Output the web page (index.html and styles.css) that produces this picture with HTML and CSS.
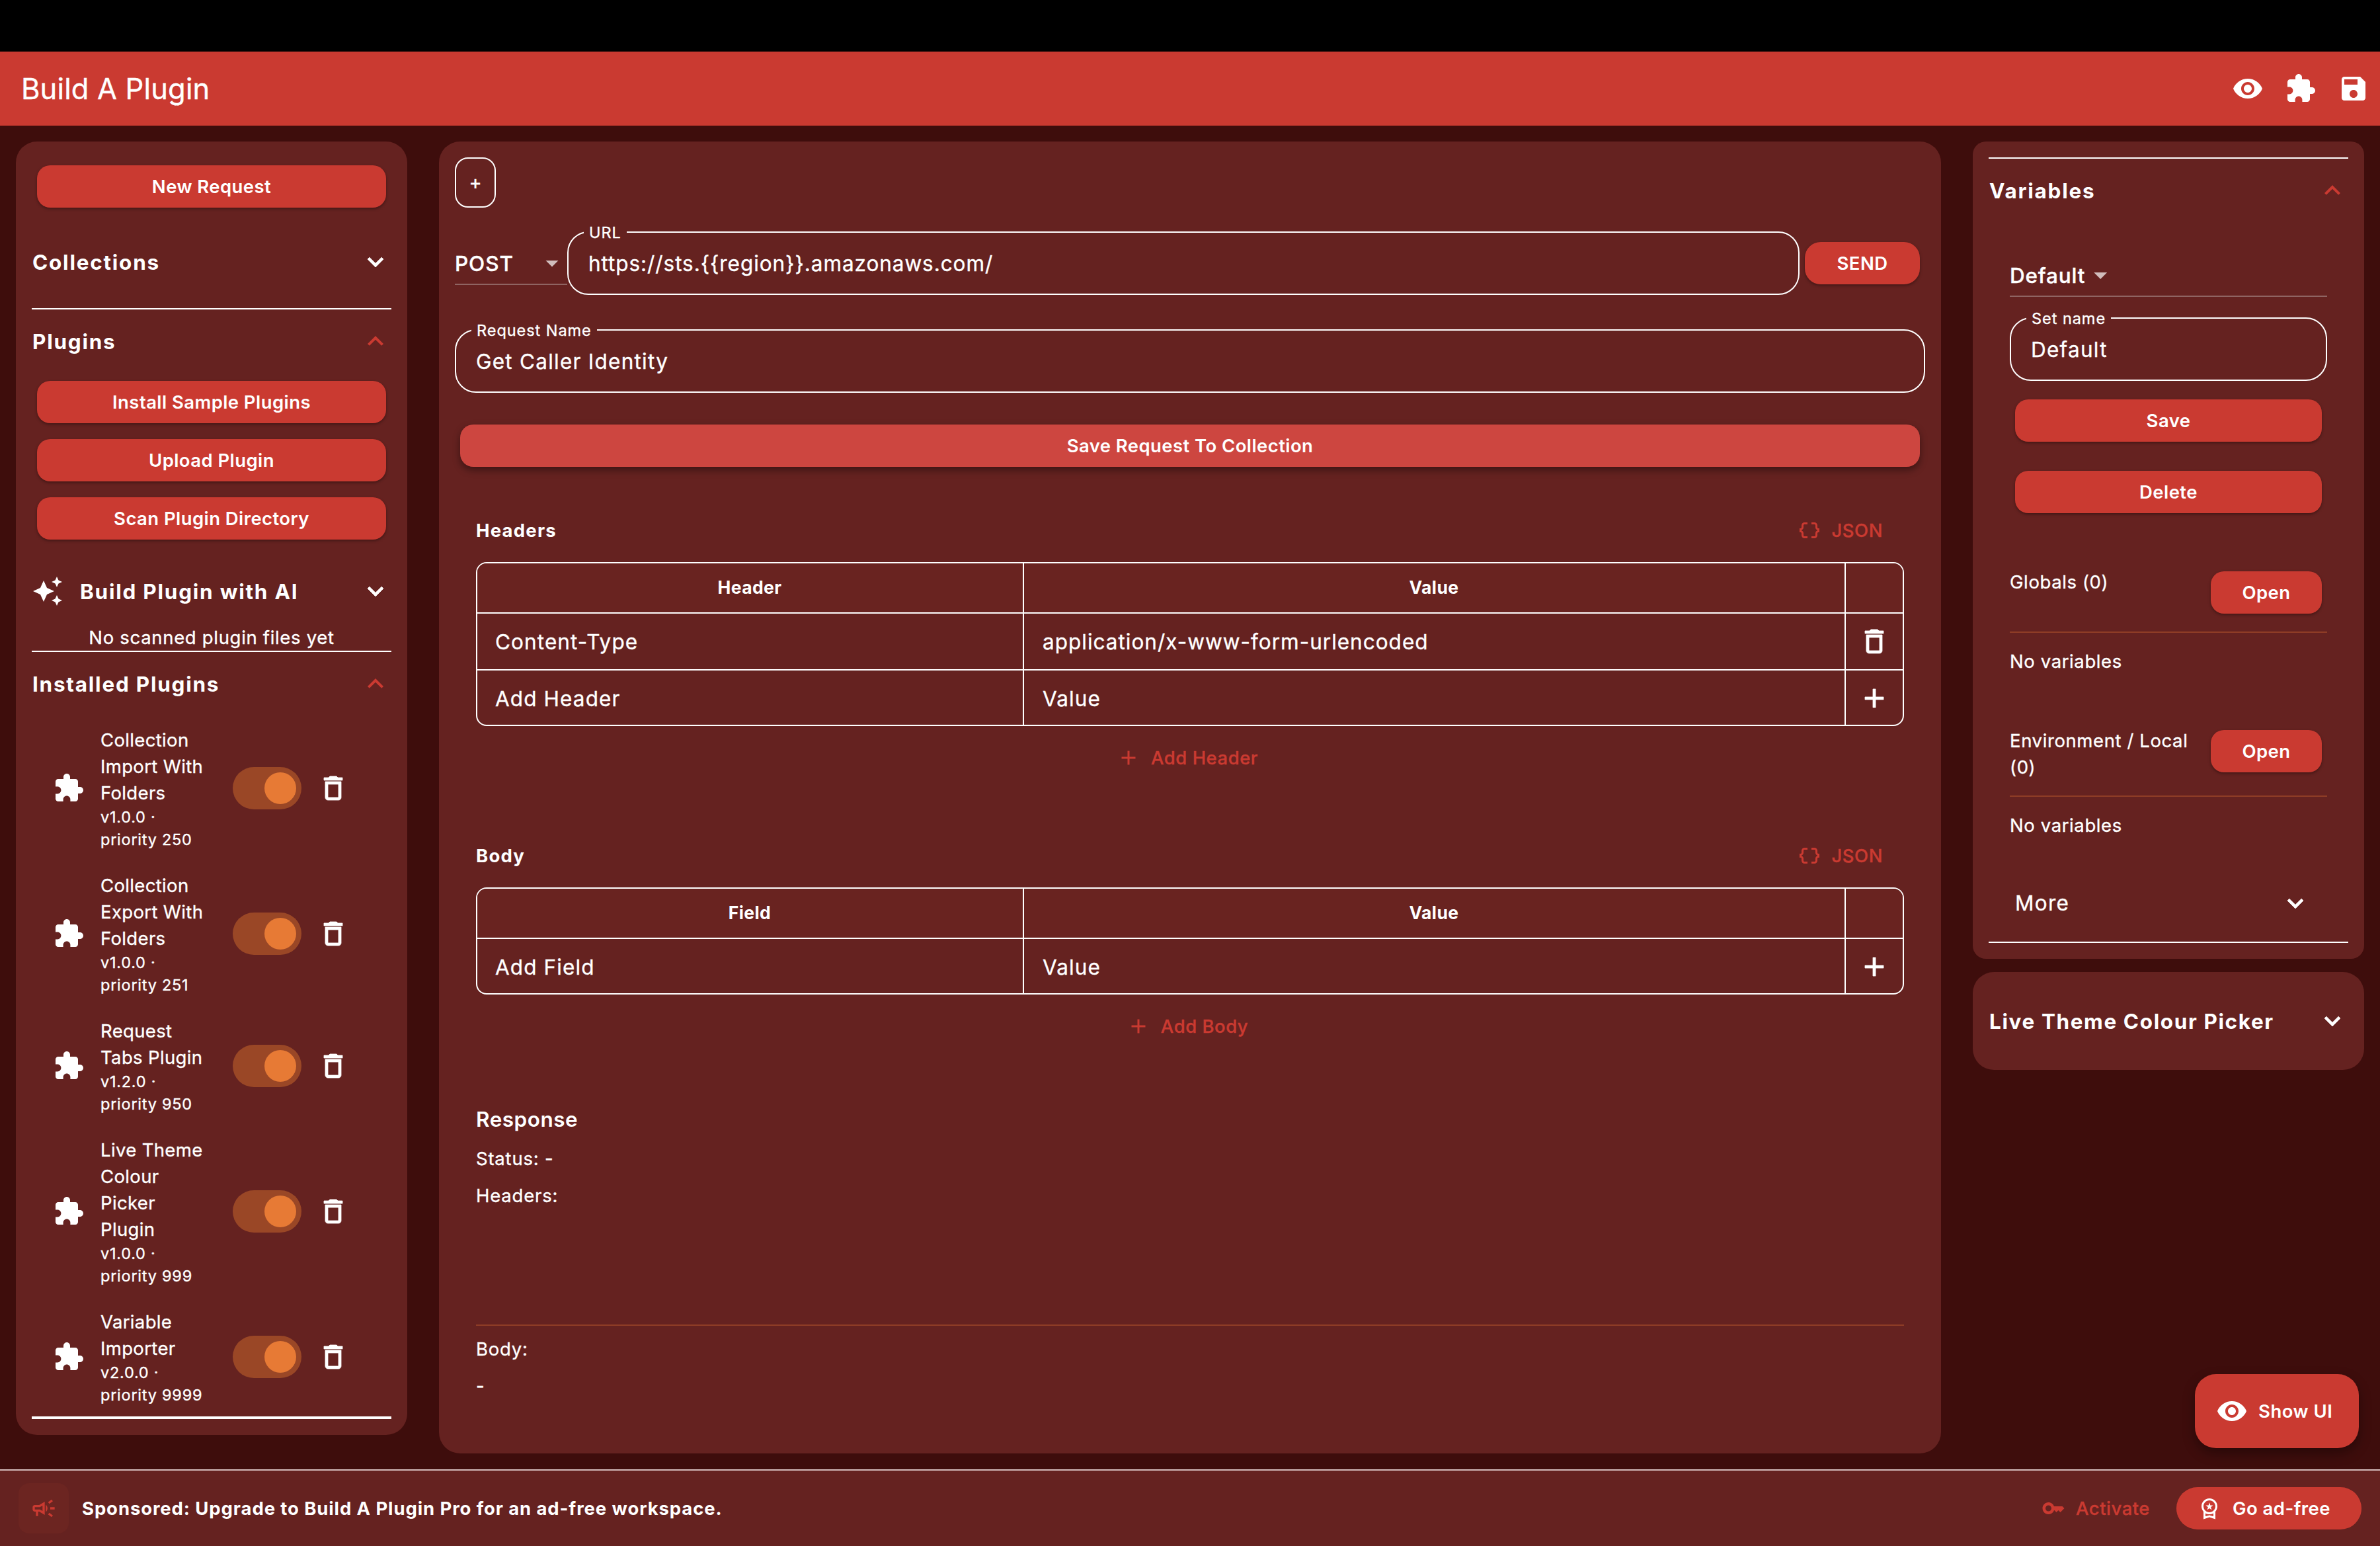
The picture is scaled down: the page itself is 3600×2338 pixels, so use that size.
FILE: index.html
```html
<!DOCTYPE html>
<html lang="en">
<head>
<meta charset="utf-8">
<title>Build A Plugin</title>
<link rel="stylesheet" href="styles.css">
</head>
<body>
<svg class="sprite" aria-hidden="true">
  <symbol id="i-down" viewBox="0 0 24 24"><path d="M16.59 8.59L12 13.17 7.41 8.59 6 10l6 6 6-6z"/></symbol>
  <symbol id="i-up" viewBox="0 0 24 24"><path d="M12 8l-6 6 1.41 1.41L12 10.83l4.59 4.58L18 14z"/></symbol>
  <symbol id="i-puzzle" viewBox="0 0 24 24"><path d="M20.5 11H19V7c0-1.1-.9-2-2-2h-4V3.5C13 2.12 11.88 1 10.5 1S8 2.12 8 3.5V5H4c-1.1 0-1.99.9-1.99 2v3.8H3.5c1.49 0 2.7 1.21 2.7 2.7s-1.21 2.7-2.7 2.7H2V20c0 1.1.9 2 2 2h3.8v-1.5c0-1.49 1.21-2.7 2.7-2.7 1.49 0 2.7 1.21 2.7 2.7V22H17c1.1 0 2-.9 2-2v-4h1.5c1.38 0 2.5-1.12 2.5-2.5S21.88 11 20.5 11z"/></symbol>
  <symbol id="i-trash" viewBox="0 0 24 24"><path d="M6 19c0 1.1.9 2 2 2h8c1.1 0 2-.9 2-2V7H6v12zM8 9h8v10H8V9zm7.5-5l-1-1h-5l-1 1H5v2h14V4h-3.5z"/></symbol>
  <symbol id="i-eye" viewBox="0 0 24 24"><path d="M12 4.5C7 4.5 2.73 7.61 1 12c1.73 4.39 6 7.5 11 7.5s9.27-3.11 11-7.5c-1.73-4.39-6-7.5-11-7.5zM12 17c-2.76 0-5-2.24-5-5s2.24-5 5-5 5 2.24 5 5-2.24 5-5 5zm0-8c-1.66 0-3 1.34-3 3s1.34 3 3 3 3-1.34 3-3-1.34-3-3-3z"/></symbol>
  <symbol id="i-save" viewBox="0 0 24 24"><path d="M17 3H5c-1.11 0-2 .9-2 2v14c0 1.1.89 2 2 2h14c1.1 0 2-.9 2-2V7l-4-4zm-5 16c-1.66 0-3-1.34-3-3s1.34-3 3-3 3 1.34 3 3-1.34 3-3 3zm3-10H5V5h10v4z"/></symbol>
  <symbol id="i-sparkle" viewBox="0 0 24 24"><path d="M19 9l1.25-2.75L23 5l-2.75-1.25L19 1l-1.25 2.75L15 5l2.75 1.25L19 9zm-7.5.5L9 4 6.5 9.5 1 12l5.5 2.5L9 20l2.5-5.5L17 12l-5.5-2.5zM19 15l-1.25 2.75L15 19l2.75 1.25L19 23l1.25-2.75L23 19l-2.75-1.25L19 15z"/></symbol>
  <symbol id="i-add" viewBox="0 0 24 24"><path d="M19 13h-6v6h-2v-6H5v-2h6V5h2v6h6v2z"/></symbol>
  <symbol id="i-braces" viewBox="0 0 24 24"><path d="M4 7v2c0 .55-.45 1-1 1H2v4h1c.55 0 1 .45 1 1v2c0 1.65 1.35 3 3 3h3v-2H7c-.55 0-1-.45-1-1v-2c0-1.3-.84-2.42-2-2.83v-.34C5.16 11.42 6 10.3 6 9V7c0-.55.45-1 1-1h3V4H7C5.35 4 4 5.35 4 7zM21 10c-.55 0-1-.45-1-1V7c0-1.65-1.35-3-3-3h-3v2h3c.55 0 1 .45 1 1v2c0 1.3.84 2.42 2 2.83v.34c-1.16.41-2 1.52-2 2.83v2c0 .55-.45 1-1 1h-3v2h3c1.65 0 3-1.35 3-3v-2c0-.55.45-1 1-1h1v-4h-1z"/></symbol>
  <symbol id="i-campaign" viewBox="0 0 24 24"><path d="M18 11v2h4v-2h-4zm-2 6.61c.96.71 2.21 1.65 3.2 2.39.4-.53.8-1.07 1.2-1.6-.99-.74-2.24-1.68-3.2-2.4-.4.54-.8 1.08-1.2 1.61zM20.4 5.6c-.4-.53-.8-1.07-1.2-1.6-.99.74-2.24 1.68-3.2 2.4.4.53.8 1.07 1.2 1.6.96-.72 2.21-1.65 3.2-2.4zM4 9c-1.1 0-2 .9-2 2v2c0 1.1.9 2 2 2h1v4h2v-4h1l5 3V6L8 9H4zm5.03 1.71L11 9.53v4.94l-1.97-1.18-.48-.29H4v-2h4.55l.48-.29zM15.5 12c0-1.33-.58-2.53-1.5-3.35v6.69c.92-.81 1.5-2.01 1.5-3.34z"/></symbol>
  <symbol id="i-key" viewBox="0 0 24 24"><path d="M21 10h-8.35C11.83 7.67 9.61 6 7 6c-3.31 0-6 2.69-6 6s2.69 6 6 6c2.61 0 4.83-1.67 5.65-4H13l2 2 2-2 2 2 4-4.04L21 10zM7 15c-1.65 0-3-1.35-3-3s1.35-3 3-3 3 1.35 3 3-1.35 3-3 3z"/></symbol>
  <symbol id="i-premium" viewBox="0 0 24 24"><path d="M9.68 13.69L12 11.93l2.31 1.76-.88-2.85L15.75 9h-2.84L12 6.19 11.09 9H8.25l2.31 1.84-.88 2.85zM20 10c0-4.42-3.58-8-8-8s-8 3.58-8 8c0 2.03.76 3.87 2 5.28V23l6-2 6 2v-7.72c1.24-1.41 2-3.25 2-5.28zm-8-6c3.31 0 6 2.69 6 6s-2.69 6-6 6-6-2.69-6-6 2.69-6 6-6zm0 15l-4 1.02v-3.1c1.18.68 2.54 1.08 4 1.08s2.82-.4 4-1.08v3.1L12 19z"/></symbol>
</svg>

<div class="app">
  <div class="statusbar"></div>
  <header class="appbar">
    <h1 class="appbar-title">Build A Plugin</h1>
    <div class="appbar-actions">
      <svg class="icon"><use href="#i-eye"/></svg>
      <svg class="icon"><use href="#i-puzzle"/></svg>
      <svg class="icon"><use href="#i-save"/></svg>
    </div>
  </header>

  <main class="workspace">
    <aside class="panel sidebar">
      <button class="btn">New Request</button>
      <div class="section section-collections"><h2>Collections</h2><svg class="icon bold"><use href="#i-down"/></svg></div>
      <div class="rule"></div>
      <div class="section"><h2>Plugins</h2><svg class="icon accent"><use href="#i-up"/></svg></div>
      <div class="button-stack">
        <button class="btn">Install Sample Plugins</button>
        <button class="btn">Upload Plugin</button>
        <button class="btn">Scan Plugin Directory</button>
      </div>
      <div class="section section-ai"><svg class="icon"><use href="#i-sparkle"/></svg><h2>Build Plugin with AI</h2><svg class="icon bold"><use href="#i-down"/></svg></div>
      <p class="empty-note">No scanned plugin files yet</p>
      <div class="rule"></div>
      <div class="section"><h2>Installed Plugins</h2><svg class="icon accent"><use href="#i-up"/></svg></div>
      <ul class="plugins">
        <li class="plugin"><svg class="icon"><use href="#i-puzzle"/></svg><div class="plugin-text"><div class="plugin-name">Collection Import With Folders</div><div class="plugin-meta">v1.0.0 · priority 250</div></div><span class="switch"></span><svg class="icon bold"><use href="#i-trash"/></svg></li>
        <li class="plugin"><svg class="icon"><use href="#i-puzzle"/></svg><div class="plugin-text"><div class="plugin-name">Collection Export With Folders</div><div class="plugin-meta">v1.0.0 · priority 251</div></div><span class="switch"></span><svg class="icon bold"><use href="#i-trash"/></svg></li>
        <li class="plugin"><svg class="icon"><use href="#i-puzzle"/></svg><div class="plugin-text"><div class="plugin-name">Request Tabs Plugin</div><div class="plugin-meta">v1.2.0 · priority 950</div></div><span class="switch"></span><svg class="icon bold"><use href="#i-trash"/></svg></li>
        <li class="plugin"><svg class="icon"><use href="#i-puzzle"/></svg><div class="plugin-text"><div class="plugin-name">Live Theme Colour Picker Plugin</div><div class="plugin-meta">v1.0.0 · priority 999</div></div><span class="switch"></span><svg class="icon bold"><use href="#i-trash"/></svg></li>
        <li class="plugin"><svg class="icon"><use href="#i-puzzle"/></svg><div class="plugin-text"><div class="plugin-name">Variable Importer</div><div class="plugin-meta">v2.0.0 · priority 9999</div></div><span class="switch"></span><svg class="icon bold"><use href="#i-trash"/></svg></li>
      </ul>
      <div class="rule rule-thick"></div>
    </aside>

    <section class="panel request">
      <button class="tab-add">+</button>
      <div class="url-row">
        <div class="select method"><span>POST</span><i class="caret"></i></div>
        <div class="field url"><label>URL</label><span>https://sts.{{region}}.amazonaws.com/</span></div>
        <button class="btn btn-send">SEND</button>
      </div>
      <div class="field request-name"><label>Request Name</label><span>Get Caller Identity</span></div>
      <button class="btn btn-save-request">Save Request To Collection</button>

      <div class="editor">
        <div class="editor-head"><h3>Headers</h3><button class="text-btn"><svg class="icon icon-s"><use href="#i-braces"/></svg>JSON</button></div>
        <div class="table">
          <div class="row row-head"><div>Header</div><div>Value</div><div></div></div>
          <div class="row"><div>Content-Type</div><div class="long">application/x-www-form-urlencoded</div><div><svg class="icon bold"><use href="#i-trash"/></svg></div></div>
          <div class="row"><div>Add Header</div><div>Value</div><div><svg class="icon bold"><use href="#i-add"/></svg></div></div>
        </div>
        <button class="text-btn add-btn"><svg class="icon icon-s"><use href="#i-add"/></svg>Add Header</button>
      </div>

      <div class="editor editor-body">
        <div class="editor-head"><h3>Body</h3><button class="text-btn"><svg class="icon icon-s"><use href="#i-braces"/></svg>JSON</button></div>
        <div class="table">
          <div class="row row-head"><div>Field</div><div>Value</div><div></div></div>
          <div class="row"><div>Add Field</div><div>Value</div><div><svg class="icon bold"><use href="#i-add"/></svg></div></div>
        </div>
        <button class="text-btn add-btn"><svg class="icon icon-s"><use href="#i-add"/></svg>Add Body</button>
      </div>

      <div class="response">
        <h3>Response</h3>
        <p>Status: -</p>
        <p>Headers:</p>
        <div class="rule-soft"></div>
        <p>Body:</p>
        <p>-</p>
      </div>
    </section>

    <div class="right">
      <aside class="panel variables">
        <div class="rule"></div>
        <div class="section"><h2>Variables</h2><svg class="icon accent"><use href="#i-up"/></svg></div>
        <div class="variables-body">
          <div class="select set-select"><span>Default</span><i class="caret"></i></div>
          <div class="field set-name"><label>Set name</label><span>Default</span></div>
          <button class="btn btn-save">Save</button>
          <button class="btn btn-delete">Delete</button>
          <div class="scope scope-global"><span>Globals (0)</span><button class="btn">Open</button></div>
          <div class="rule-soft"></div>
          <p class="none">No variables</p>
          <div class="scope"><span>Environment / Local (0)</span><button class="btn">Open</button></div>
          <div class="rule-soft"></div>
          <p class="none">No variables</p>
          <div class="more"><span>More</span><svg class="icon bold"><use href="#i-down"/></svg></div>
        </div>
        <div class="rule"></div>
      </aside>
      <aside class="panel theme">
        <div class="section"><h2>Live Theme Colour Picker</h2><svg class="icon bold"><use href="#i-down"/></svg></div>
      </aside>
    </div>
    <button class="fab"><svg class="icon"><use href="#i-eye"/></svg>Show UI</button>
  </main>

  <footer class="sponsor">
    <span class="sponsor-tile"><svg class="icon"><use href="#i-campaign"/></svg></span>
    <strong>Sponsored: Upgrade to Build A Plugin Pro for an ad-free workspace.</strong>
    <button class="text-btn activate"><svg class="icon icon-s"><use href="#i-key"/></svg>Activate</button>
    <button class="ad-free"><svg class="icon icon-s"><use href="#i-premium"/></svg>Go ad-free</button>
  </footer>
</div>
</body>
</html>
```
FILE: styles.css
```css
:root {
  --bg: #3e0d0c;
  --panel: #652220;
  --primary: #ca3a31;
  --soft: #8f3d26;
}

* { box-sizing: border-box; }

body {
  margin: 0;
  background: var(--bg);
  color: #fff;
  font: 400 27.5px/40px Inter, "Liberation Sans", sans-serif;
  -webkit-text-stroke: 0.35px currentColor;
}

h1, h2, h3, p, ul { margin: 0; padding: 0; }

button {
  border: 0;
  padding: 0;
  margin: 0;
  background: none;
  color: inherit;
  font: inherit;
}

h2, h3, strong, .btn, .fab, .ad-free, .row-head { -webkit-text-stroke: 0; }

.sprite { position: absolute; width: 0; height: 0; }

.icon {
  display: block;
  flex: none;
  width: 48px;
  height: 48px;
  fill: currentColor;
}

.icon-s { width: 36px; height: 36px; }
.accent { color: var(--primary); }
.bold { stroke: currentColor; stroke-width: 0.4px; }

.app {
  display: flex;
  flex-direction: column;
  width: 3600px;
  height: 2338px;
}

.statusbar { height: 78px; background: #000; }

.appbar {
  display: flex;
  align-items: center;
  justify-content: space-between;
  height: 112px;
  padding: 0 16px 0 32px;
  background: var(--primary);
}

.appbar-title {
  font-size: 43.5px;
  font-weight: 400;
  letter-spacing: 0.15px;
}

.appbar-actions { display: flex; gap: 32px; }

.workspace {
  position: relative;
  display: flex;
  align-items: flex-start;
  gap: 48px;
  height: 2032px;
  padding: 24px 24px 0;
}

.panel {
  background: var(--panel);
  border-radius: 32px;
}

.rule { height: 2px; background: #fff; }
.rule-thick { height: 4px; }
.rule-soft { height: 2px; background: var(--soft); }

.section {
  display: flex;
  align-items: center;
  height: 96px;
}

.section h2 {
  flex: 1;
  padding: 2px 0 0 1px;
  font-size: 31.5px;
  font-weight: 700;
  letter-spacing: 1.75px;
}

.btn {
  display: flex;
  align-items: center;
  justify-content: center;
  height: 64px;
  border-radius: 20px;
  background: var(--primary);
  box-shadow: 0 2px 4px rgba(0, 0, 0, 0.35);
  font-weight: 600;
  letter-spacing: 0.42px;
}

/* Sidebar */
.sidebar {
  display: flex;
  flex-direction: column;
  width: 592px;
  height: 1956px;
  padding: 36px 24px 24px;
}

.sidebar .btn { margin: 0 8px; }
.section-collections { height: 140px; margin-top: 12px; }

.button-stack {
  display: flex;
  flex-direction: column;
  gap: 24px;
  margin-top: 12px;
}

.section-ai { gap: 24px; margin-top: 30px; }

.empty-note {
  padding-top: 2px;
  text-align: center;
  letter-spacing: 0.68px;
}

.plugins { list-style: none; }

.plugin {
  display: flex;
  align-items: center;
  gap: 24px;
  padding: 16px 0 16px 32px;
}

.plugin-text { width: 176px; margin: 1px 0 -1px; padding-right: 8px; }
.plugin-name { letter-spacing: 0.35px; }

.plugin-meta {
  font-size: 23.5px;
  line-height: 34px;
  letter-spacing: 0.75px;
}

.switch {
  display: flex;
  align-items: center;
  justify-content: flex-end;
  width: 104px;
  height: 64px;
  padding: 8px;
  border-radius: 32px;
  background: #9a4726;
}

.switch::after {
  content: "";
  width: 48px;
  height: 48px;
  border-radius: 50%;
  background: #e77a35;
}

/* Request editor */
.request {
  display: flex;
  flex-direction: column;
  width: 2272px;
  height: 1984px;
  padding: 24px;
}

.tab-add {
  width: 62px;
  height: 76px;
  border: 2px solid #fff;
  border-radius: 20px;
  font-size: 29px;
}

.url-row {
  display: flex;
  align-items: center;
  margin-top: 36px;
}

.select {
  display: flex;
  align-items: center;
  border-bottom: 2px solid #8f6462;
  font-size: 31.5px;
  font-weight: 500;
}

.method {
  justify-content: space-between;
  width: 170px;
  height: 66px;
  padding: 3px 13px 0 0;
  letter-spacing: 0.9px;
}

.caret {
  width: 20px;
  height: 10px;
  background: #d1bdbc;
  clip-path: polygon(0 0, 100% 0, 50% 100%);
}

.field {
  position: relative;
  display: flex;
  align-items: center;
  height: 96px;
  padding: 2px 0 0 30px;
  border: 2px solid #fff;
  border-radius: 32px;
  font-size: 31.5px;
  letter-spacing: 1.25px;
}

.field label {
  position: absolute;
  left: 23px;
  top: -19px;
  padding: 0 8px;
  background: var(--panel);
  font-size: 23.5px;
  letter-spacing: 0.95px;
  line-height: 38px;
}

.url { flex: 1; letter-spacing: 0.93px; }

.btn-send {
  width: 174px;
  margin: 0 8px;
  border-radius: 24px;
}

.request-name { margin-top: 52px; }

.btn-save-request {
  margin: 48px 8px 0;
  background: #cd4640;
  box-shadow: 0 5px 12px rgba(0, 0, 0, 0.4);
}

.editor {
  display: flex;
  flex-direction: column;
  margin: 48px 32px 0;
}

.editor-body { margin-top: 52px; }

.editor-head {
  display: flex;
  align-items: center;
  justify-content: space-between;
  height: 96px;
  padding-right: 32px;
}

.editor-head h3 {
  font-size: 27.5px;
  font-weight: 700;
  letter-spacing: 1.2px;
}

.text-btn {
  display: flex;
  align-items: center;
  gap: 16px;
  color: var(--primary);
  font-weight: 500;
  letter-spacing: 0.5px;
}

.add-btn {
  align-self: center;
  height: 96px;
  margin-right: 8px;
}

.table {
  border: 2px solid #fff;
  border-radius: 16px;
  overflow: hidden;
}

.row {
  display: grid;
  grid-template-columns: 827px 1fr 86px;
  height: 86px;
  border-bottom: 2px solid #fff;
  font-size: 31.5px;
  letter-spacing: 1.1px;
}

.row:last-child { height: 82px; border-bottom: 0; }

.row > div {
  display: flex;
  align-items: center;
  padding: 2px 0 0 28px;
  border-right: 2px solid #fff;
}

.row:last-child > div { padding-top: 4px; }
.row > div:first-child { padding-left: 27px; }
.row > .long { letter-spacing: 1px; }

.row > div:last-child,
.row:last-child > div:last-child {
  justify-content: center;
  padding: 0;
  border-right: 0;
}

.row:last-child > div:last-child { padding-top: 2px; }

.row-head {
  height: 76px;
  background: #692320;
  font-size: 26.5px;
  font-weight: 700;
  letter-spacing: 0.4px;
}

.row-head > div,
.row-head > div:first-child {
  justify-content: center;
  padding: 0 1px 2px 0;
}

.response {
  margin: 69px 32px 0;
  letter-spacing: 0.8px;
}

.response h3 {
  font-size: 31.5px;
  font-weight: 600;
  line-height: 48px;
  letter-spacing: 0.5px;
}

.response p { margin-top: 16px; }
.response h3 + p { margin-top: 15px; }
.response .rule-soft { margin-top: 175px; }
.response .rule-soft + p { margin-top: 15px; }

/* Right column */
.right {
  display: flex;
  flex-direction: column;
  gap: 20px;
  width: 592px;
}

.variables { padding: 24px; border-radius: 20px; }
.variables-body { display: flex; flex-direction: column; padding: 0 32px; }

.set-select {
  gap: 13px;
  height: 64px;
  margin-top: 49px;
  padding-top: 2px;
  letter-spacing: 0.8px;
}

.set-name { margin-top: 31px; }
.btn-save { margin: 28px 8px 0; }
.btn-delete { margin: 44px 8px 0; }

.scope {
  display: flex;
  align-items: flex-start;
  justify-content: space-between;
  margin-top: 80px;
  letter-spacing: 0.6px;
}

.scope span { width: 290px; }
.scope .btn { width: 168px; margin: 4px 8px 0 0; }
.scope-global { margin-top: 84px; }
.variables-body .rule-soft { margin-top: 23px; }
.variables-body .scope-global + .rule-soft { margin-top: 27px; }
.none { margin-top: 23px; letter-spacing: 0.6px; }

.more {
  display: flex;
  align-items: center;
  justify-content: space-between;
  height: 116px;
  margin-top: 40px;
  padding: 0 24px 0 8px;
  font-size: 31.5px;
  letter-spacing: 1.3px;
}

.theme {
  display: flex;
  flex-direction: column;
  justify-content: center;
  height: 148px;
  padding: 0 24px;
}

.theme h2 { letter-spacing: 1.6px; }

.fab {
  position: absolute;
  right: 32px;
  bottom: 32px;
  display: flex;
  align-items: center;
  gap: 16px;
  width: 248px;
  height: 112px;
  padding-left: 32px;
  border-radius: 32px;
  background: var(--primary);
  box-shadow: 0 8px 18px rgba(0, 0, 0, 0.35);
  font-weight: 600;
  letter-spacing: 0.5px;
}

/* Footer */
.sponsor {
  display: flex;
  align-items: center;
  height: 116px;
  padding: 0 28px;
  border-top: 2px solid #d3bcbb;
  background: var(--panel);
}

.sponsor-tile {
  display: flex;
  align-items: center;
  justify-content: center;
  width: 76px;
  height: 76px;
  border-radius: 16px;
  background: #6c2521;
  color: var(--primary);
}

.sponsor-tile .icon { width: 40px; height: 40px; }

.sponsor strong {
  margin-left: 20px;
  font-weight: 700;
  letter-spacing: 0.89px;
}

.activate { margin: 0 40px 0 auto; }

.ad-free {
  display: flex;
  align-items: center;
  gap: 17px;
  width: 280px;
  height: 64px;
  padding-left: 32px;
  border-radius: 32px;
  background: var(--primary);
  font-weight: 600;
  letter-spacing: 0.45px;
}
```
